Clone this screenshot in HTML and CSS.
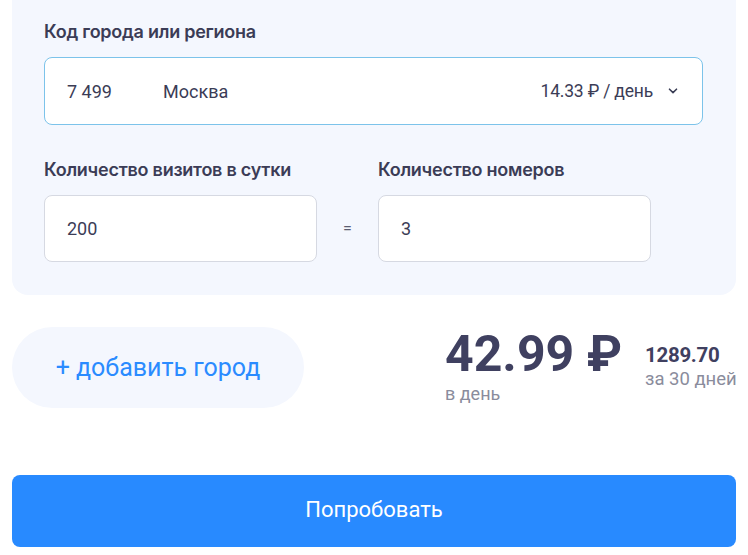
FILE: index.html
```html
<!DOCTYPE html>
<html lang="ru">
<head>
<meta charset="utf-8">
<link rel="stylesheet" href="styles.css">
</head>
<body>
<div class="panel">
  <div class="label">Код города или региона</div>
  <div class="select">
    <span class="code">7 499</span>
    <span class="city">Москва</span>
    <span class="rate">14.33 ₽ / день</span>
    <svg class="chev" width="10" height="6" viewBox="0 0 10 6"><path d="M1.5 1.2 L5 4.6 L8.5 1.2" fill="none" stroke="#3a3d55" stroke-width="1.6" stroke-linecap="round" stroke-linejoin="round"/></svg>
  </div>
  <div class="pair">
    <div class="label">Количество визитов в сутки</div>
    <div></div>
    <div class="label">Количество номеров</div>
    <div class="input">200</div>
    <div class="eq">=</div>
    <div class="input">3</div>
  </div>
</div>
<div class="summary">
  <div class="add">+ добавить город</div>
  <div class="price">
    <div class="big">42.99 ₽</div>
    <div class="sub">в день</div>
  </div>
  <div class="month">
    <div class="total">1289.70</div>
    <div class="sub">за 30 дней</div>
  </div>
</div>
<div class="try">Попробовать</div>
</body>
</html>
```

FILE: styles.css
```css
* { box-sizing: border-box; }
html, body { margin: 0; padding: 0; background: #fff; }
body {
  width: 748px;
  height: 555px;
  overflow: hidden;
  font-family: Roboto, "Liberation Sans", sans-serif;
  color: #3b3c56;
}
.panel {
  margin: -16px 12px 0 12px;
  padding: 38px 33px 33px 32px;
  background: #f4f7fe;
  border-radius: 16px;
}
.label {
  font-family: Inter, Roboto, sans-serif;
  font-size: 18px;
  line-height: 20px;
  font-weight: 600;
  color: #3b3c56;
  letter-spacing: -0.25px;
}
.select {
  margin-top: 15px;
  height: 68px;
  background: #fff;
  border: 1px solid #7cc3ea;
  border-radius: 8px;
  display: flex;
  align-items: center;
  padding: 0 24px 0 22px;
  font-size: 18px;
  color: #3b3c56;
}
.code { width: 96px; }
.city { flex: 1; }
.rate { margin-right: 15px; font-size: 17.5px; letter-spacing: -0.2px; }
.chev { display: block; }
.pair {
  margin-top: 35px;
  display: grid;
  grid-template-columns: 273px 61px 273px;
  row-gap: 15px;
}
.input {
  height: 67px;
  background: #fff;
  border: 1px solid #d6d9e2;
  border-radius: 8px;
  display: flex;
  align-items: center;
  padding-left: 22px;
  font-size: 18px;
  color: #3b3c56;
}
.eq {
  display: flex;
  align-items: center;
  justify-content: center;
  font-size: 16px;
  color: #5a5d72;
}
.summary {
  margin: 32px 12px 0 12px;
  display: flex;
  align-items: flex-start;
}
.add {
  flex: none;
  width: 292px;
  height: 81px;
  border-radius: 41px;
  background: #f4f7fe;
  color: #2a8bff;
  font-size: 25px;
  display: flex;
  align-items: center;
  justify-content: center;
}
.price {
  flex: none;
  margin-left: 141px;
  width: 200px;
}
.big {
  font-size: 50px;
  line-height: 52px;
  font-weight: 700;
  color: #3f4060;
  margin-top: 1px;
  white-space: nowrap;
}
.sub {
  font-size: 18px;
  color: #8a8c9c;
  line-height: 20px;
  white-space: nowrap;
}
.price .sub { margin-top: 4px; }
.month {
  flex: none;
  padding-top: 16px;
  white-space: nowrap;
}
.total {
  font-size: 20.5px;
  font-weight: 700;
  color: #3f4060;
  line-height: 24px;
  letter-spacing: -0.3px;
}
.month .sub { margin-top: 2px; font-size: 18.5px; }
.try {
  margin: 67px 12px 0 12px;
  height: 72px;
  border-radius: 8px;
  background: #288aff;
  color: #fff;
  font-size: 22px;
  line-height: 26px;
  padding-bottom: 2px;
  display: flex;
  align-items: center;
  justify-content: center;
}
```
